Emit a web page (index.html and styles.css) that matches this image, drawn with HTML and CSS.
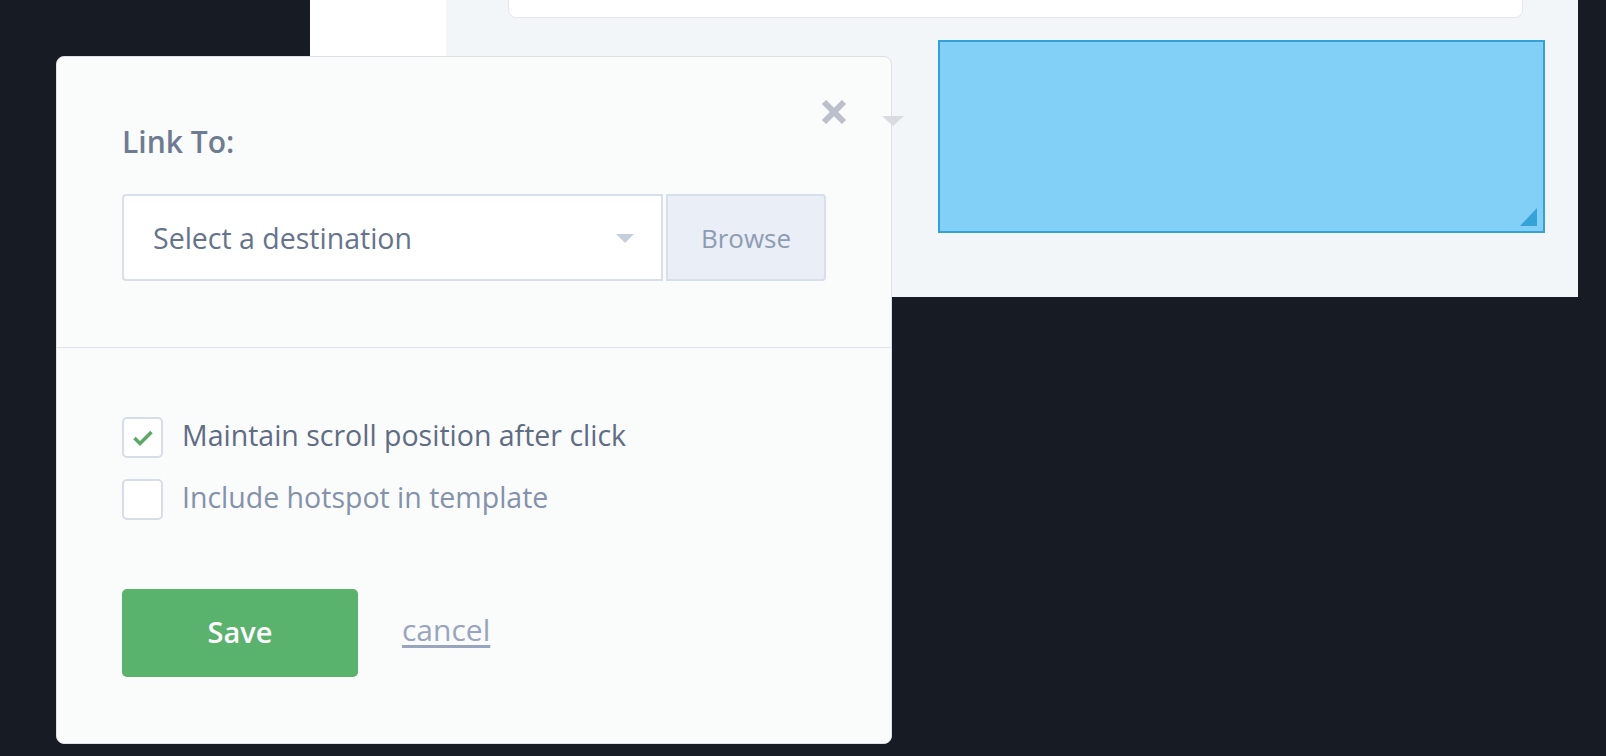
FILE: index.html
```html
<!DOCTYPE html>
<html lang="en">
<head>
  <meta charset="UTF-8" />
  <meta name="viewport" content="width=device-width, initial-scale=1.0"/>
  <title>Link To</title>
  <link rel="stylesheet" href="styles.css">
</head>
<body>
  <div class="stage">
    <div class="sidebar"></div>
    <div class="canvas">
      <div class="card"></div>
      <div class="hotspot"><span class="resize"></span></div>
    </div>
  </div>

  <div class="modal">
    <button class="close" aria-label="Close">
      <svg width="26" height="24" viewBox="0 0 26 24">
        <path d="M3 2 L23 22 M23 2 L3 22" stroke="#bac1cb" stroke-width="6" fill="none"/>
      </svg>
    </button>
    <span class="pointer"></span>

    <div class="section top">
      <div class="label">Link To:</div>
      <div class="picker">
        <div class="select">
          <span>Select a destination</span>
          <span class="caret"></span>
        </div>
        <div class="browse">Browse</div>
      </div>
    </div>

    <div class="section bottom">
      <label class="check-row">
        <span class="box">
          <svg width="20" height="16" viewBox="0 0 20 16">
            <path d="M1.5 8 L7 13.5 L18.5 2" stroke="#5aa965" stroke-width="3.5" fill="none"/>
          </svg>
        </span>
        <span class="check-text">Maintain scroll position after click</span>
      </label>
      <label class="check-row">
        <span class="box"></span>
        <span class="check-text muted">Include hotspot in template</span>
      </label>

      <div class="actions">
        <button class="save">Save</button>
        <a href="#" class="cancel">cancel</a>
      </div>
    </div>
  </div>
</body>
</html>
```

FILE: styles.css
```css
body { margin: 0; width: 1606px; height: 756px; overflow: hidden; background: #171b24; font-family: "Open Sans", "Liberation Sans", sans-serif; }

.stage { margin-left: 310px; width: 1268px; height: 297px; display: flex; }
.sidebar { width: 136px; background: #fff; }
.canvas { flex: 1; background: #f3f6f8; }
.card { margin-left: 62px; width: 1015px; height: 18px; box-sizing: border-box; background: #fff; border: 1px solid #e4e7eb; border-top: none; border-radius: 0 0 8px 8px; }
.hotspot { position: relative; margin: 22px 0 0 492px; width: 607px; height: 193px; box-sizing: border-box; background: #82cff8; border: 2px solid #34a1d7; }
.resize { position: absolute; right: 6px; bottom: 5px; width: 0; height: 0; border-left: 17px solid transparent; border-bottom: 18px solid #35a2d8; }

.modal { position: absolute; left: 56px; top: 56px; width: 836px; height: 688px; box-sizing: border-box; background: #fafbfb; border: 1px solid #dde1e6; border-radius: 8px; }
.close { position: absolute; left: 764px; top: 43px; padding: 0; border: none; background: none; line-height: 0; }
.pointer { position: absolute; left: 825px; top: 59px; width: 0; height: 0; border-left: 11px solid transparent; border-right: 11px solid transparent; border-top: 10px solid #d8dbe0; }

.section { padding: 0 65px; }
.top { height: 291px; box-sizing: border-box; padding-top: 67px; border-bottom: 1px solid #dde3ea; }
.label { font-size: 30px; font-weight: 600; line-height: 36px; color: #6e7b93; }
.picker { display: flex; gap: 3px; margin-top: 34px; height: 87px; }
.select { width: 541px; box-sizing: border-box; display: flex; align-items: center; justify-content: space-between; padding: 0 27px 0 29px; background: #fff; border: 2px solid #d8dfe8; border-radius: 4px 0 0 4px; font-size: 28.5px; color: #65748c; }
.caret { width: 0; height: 0; border-left: 9px solid transparent; border-right: 9px solid transparent; border-top: 9px solid #c7cfdd; margin-top: 2px; }
.browse { width: 160px; box-sizing: border-box; display: flex; align-items: center; justify-content: center; background: #e9eef7; border: 2px solid #d8dfe8; border-radius: 0 4px 4px 0; font-size: 26px; color: #8e9cb1; }

.bottom { display: flex; flex-direction: column; padding-top: 69px; }
.check-row { display: flex; align-items: flex-start; gap: 19px; }
.check-row + .check-row { margin-top: 21px; }
.box { flex-shrink: 0; width: 41px; height: 41px; box-sizing: border-box; display: flex; align-items: center; justify-content: center; background: #fff; border: 2px solid #d6dde8; border-radius: 5px; }
.check-text { font-size: 28.5px; line-height: 36px; color: #5e6c84; }
.check-text.muted { color: #8492aa; }

.actions { display: flex; align-items: center; gap: 44px; margin-top: 69px; }
.save { width: 236px; height: 88px; padding: 0 0 4px; border: none; border-radius: 5px; background: #5ab36d; color: #fff; font-family: inherit; font-size: 29px; font-weight: 600; }
.cancel { margin-bottom: 7px; font-size: 30px; color: #98a5bd; text-decoration: underline; text-underline-offset: 4px; }
```
